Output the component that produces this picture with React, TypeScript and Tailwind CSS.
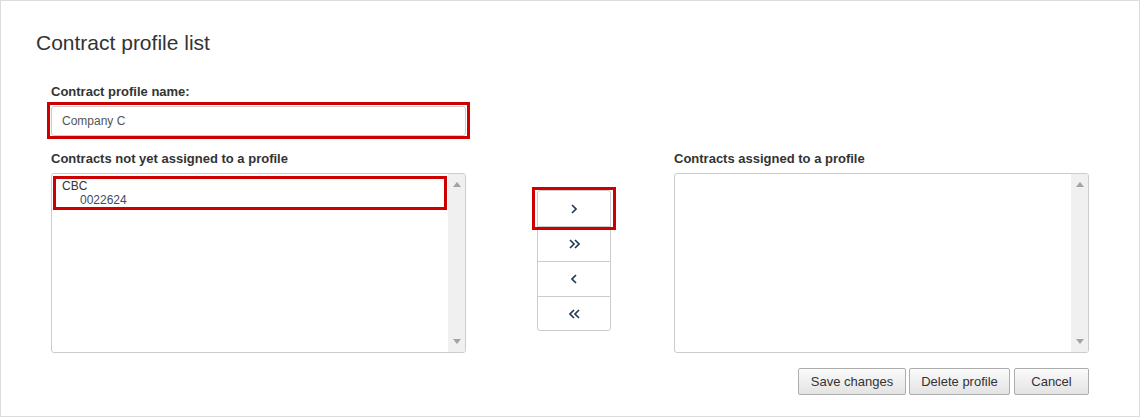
import { useState } from "react";

function ScrollTrack() {
  return (
    <div className="w-[17px] bg-[#f0f0f0] flex flex-col justify-between items-center py-[8px]">
      <svg width="8" height="5" viewBox="0 0 8 5">
        <path d="M0 5 L4 0 L8 5 Z" fill="#a3a3a3" />
      </svg>
      <svg width="8" height="5" viewBox="0 0 8 5">
        <path d="M0 0 L8 0 L4 5 Z" fill="#a3a3a3" />
      </svg>
    </div>
  );
}

function Chevron({ dir, double }: { dir: "left" | "right"; double?: boolean }) {
  const right = dir === "right";
  const one = right ? "M1 1 L5 5 L1 9" : "M5 1 L1 5 L5 9";
  const two = right ? "M6 1 L10 5 L6 9" : "M10 1 L6 5 L10 9";
  return (
    <svg width={double ? 11 : 6} height="10" viewBox={double ? "0 0 11 10" : "0 0 6 10"}>
      <path d={one} fill="none" stroke="#243b5a" strokeWidth="1.7" />
      {double && <path d={two} fill="none" stroke="#243b5a" strokeWidth="1.7" />}
    </svg>
  );
}

export default function App() {
  const [name, setName] = useState("Company C");

  return (
    <div
      className="w-[1140px] h-[417px] border border-[#dcdcdc] bg-white text-[#333]"
      style={{ fontFamily: '"Liberation Sans", Arial, sans-serif' }}
    >
      <h1 className="pl-[35px] pt-[30px] text-[21px] leading-[24px] font-normal text-[#333]">
        Contract profile list
      </h1>

      <div className="pl-[50px] pt-[29px]">
        {/* Profile name */}
        <label className="block text-[13px] leading-[15px] font-bold">
          Contract profile name:
        </label>
        <div className="relative mt-[7px] w-[415px]">
          <input
            value={name}
            onChange={(e) => setName(e.target.value)}
            className="block w-full h-[30px] px-[10px] text-[12px] text-[#555] border border-[#ccc] rounded-[3px] bg-white outline-none"
          />
          <div className="absolute -left-[4px] -right-[4px] -top-[4px] -bottom-[3px] border-[3px] border-[#cc0000] pointer-events-none" />
        </div>

        {/* Lists */}
        <div className="flex mt-[15px]">
          <div className="w-[415px]">
            <div className="text-[13px] leading-[15px] font-bold">
              Contracts not yet assigned to a profile
            </div>
            <div className="mt-[7px] h-[180px] border border-[#ccc] rounded-[3px] flex overflow-hidden">
              <div className="flex-1 pt-[2px] pl-[1px] pr-[1px]">
                <div className="border-[3px] border-[#cc0000] pl-[6px] text-[12px] leading-[14px]">
                  <div className="text-[#333]">CBC</div>
                  <div className="pl-[18px] text-[#3d4c66]">0022624</div>
                </div>
              </div>
              <ScrollTrack />
            </div>
          </div>

          <div className="ml-[71px] w-[74px] mt-[39px]">
            <div className="relative flex flex-col border border-[#ccc] rounded-[3px] bg-white">
              <button className="h-[35px] flex items-center justify-center rounded-t-[3px]">
                <Chevron dir="right" />
              </button>
              <button className="h-[35px] flex items-center justify-center border-t border-[#ccc]">
                <Chevron dir="right" double />
              </button>
              <button className="h-[35px] flex items-center justify-center border-t border-[#ccc]">
                <Chevron dir="left" />
              </button>
              <button className="h-[34px] flex items-center justify-center border-t border-[#ccc] rounded-b-[3px]">
                <Chevron dir="left" double />
              </button>
              <div className="absolute -left-[6px] -right-[6px] -top-[4px] h-[43px] border-[3px] border-[#cc0000] pointer-events-none" />
            </div>
          </div>

          <div className="ml-[63px] w-[415px]">
            <div className="text-[13px] leading-[15px] font-bold">
              Contracts assigned to a profile
            </div>
            <div className="mt-[7px] h-[180px] border border-[#ccc] rounded-[3px] flex overflow-hidden">
              <div className="flex-1" />
              <ScrollTrack />
            </div>
          </div>
        </div>

        {/* Actions */}
        <div className="flex justify-end w-[1038px] mt-[15px] gap-[3px] text-[13px]">
          <button className="h-[27px] w-[108px] border border-[#adadad] rounded-[2px] bg-gradient-to-b from-[#fbfbfb] to-[#e3e3e3] text-[#333]">
            Save changes
          </button>
          <button className="h-[27px] w-[101px] border border-[#adadad] rounded-[2px] bg-gradient-to-b from-[#fbfbfb] to-[#e3e3e3] text-[#333]">
            Delete profile
          </button>
          <button className="ml-[1px] h-[27px] w-[75px] border border-[#adadad] rounded-[2px] bg-gradient-to-b from-[#fbfbfb] to-[#e3e3e3] text-[#333]">
            Cancel
          </button>
        </div>
      </div>
    </div>
  );
}
